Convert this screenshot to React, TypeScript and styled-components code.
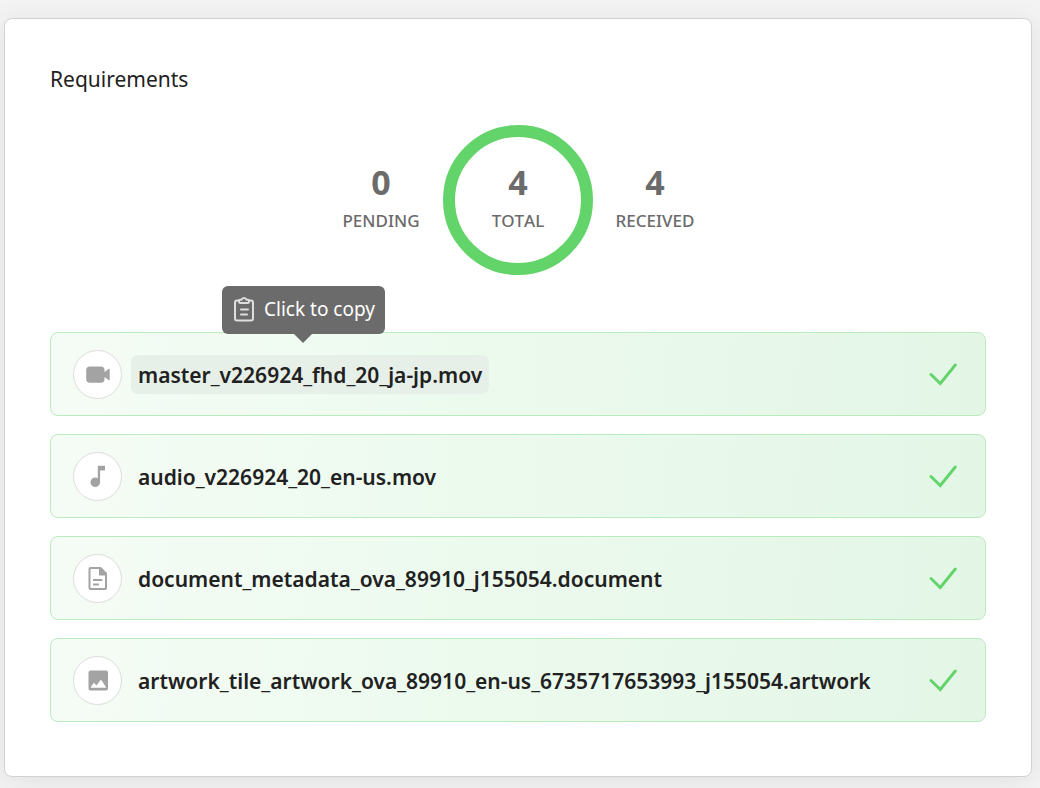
import React from "react";
import styled, { createGlobalStyle } from "styled-components";

const GlobalStyle = createGlobalStyle`
  *, *::before, *::after { box-sizing: border-box; }
  body {
    margin: 0;
    min-height: 100vh;
    background: #f3f3f3;
    color: #212121;
    font-family: "Noto Sans", "Open Sans", sans-serif;
  }
`;

const Page = styled.main`
  padding: 18px 8px 11px 4px;
`;

const Card = styled.section`
  padding: 45px 45px 54px;
  background: #fff;
  border: 1px solid #d2d2d2;
  border-radius: 8px;
  box-shadow: 0 4px 28px rgba(0, 0, 0, 0.08);
`;

const Title = styled.h1`
  margin: 0;
  font-size: 21px;
  line-height: 30px;
  font-weight: 400;
`;

const Summary = styled.div`
  display: flex;
  justify-content: center;
  align-items: center;
  gap: 22px;
  margin: 31px 0 57px;
`;

const Stat = styled.div<{ $ring?: boolean }>`
  display: flex;
  flex-direction: column;
  align-items: center;
  justify-content: center;
  width: ${(p) => (p.$ring ? "150px" : "80px")};
  height: 150px;
  padding-bottom: 2px;
  border: ${(p) => (p.$ring ? "12px solid #62d46a" : "0")};
  border-radius: 50%;
  color: #6b6b6b;
`;

const Count = styled.strong`
  font-size: 34px;
  line-height: 44px;
  font-weight: 700;
`;

const Label = styled.span`
  font-size: 17px;
  line-height: 34px;
  font-weight: 500;
  font-kerning: none;
`;

const List = styled.ul`
  display: flex;
  flex-direction: column;
  gap: 18px;
  margin: 0;
  padding: 0;
  list-style: none;
`;

const Row = styled.li`
  display: flex;
  align-items: center;
  gap: 9px;
  height: 84px;
  padding: 0 28px 0 22px;
  border: 1px solid #b9ebbd;
  border-radius: 8px;
  background: linear-gradient(95deg, #f5fcf5 0%, #ecfaee 45%, #e3f6e6 100%);
`;

const IconCircle = styled.span`
  display: flex;
  flex: none;
  align-items: center;
  justify-content: center;
  width: 49px;
  height: 49px;
  border: 1px solid #dcdcdc;
  border-radius: 50%;
  background: #fff;
  color: #a3a3a3;
`;

const NameArea = styled.div`
  position: relative;
  margin-right: auto;
`;

const FileName = styled.button<{ $active?: boolean }>`
  display: block;
  height: 39px;
  padding: 1px 7px 0;
  border: 0;
  border-radius: 7px;
  background: ${(p) => (p.$active ? "#e7f0e8" : "transparent")};
  color: #212121;
  font: inherit;
  font-size: 21px;
  line-height: 38px;
  font-weight: 600;
  white-space: nowrap;
  cursor: pointer;
`;

const Tooltip = styled.div`
  position: absolute;
  left: 91px;
  bottom: 60px;
  display: flex;
  align-items: center;
  gap: 8px;
  height: 48px;
  padding: 0 10px 1px;
  border-radius: 6px;
  background: #6b6b6b;
  color: #fff;
  font-size: 19px;
  line-height: 24px;
  white-space: nowrap;

  &::after {
    content: "";
    position: absolute;
    top: 100%;
    left: 50%;
    margin-left: -9px;
    border: 9px solid transparent;
    border-top-color: #6b6b6b;
    border-bottom: 0;
  }
`;

type Kind = "video" | "audio" | "document" | "artwork";

const shapes: Record<Kind, React.ReactNode> = {
  video: (
    <path
      fill="currentColor"
      d="M4 4.500H15Q18.500 4.500 18.500 8V10L22.500 7Q23.700 6.500 23.700 7.600V17.400Q23.700 18.500 22.500 18L18.500 15V17Q18.500 20.800 15 20.800H4Q.2 20.800.2 17V8Q.2 4.500 4 4.500Z"
    />
  ),
  audio: (
    <path
      fill="currentColor"
      d="M11.800 1.800H19V6.600H14.100V18A4.800 4.800 0 1 1 11.800 14.100Z"
    />
  ),
  document: (
    <>
      <path
        fill="none"
        stroke="currentColor"
        strokeWidth="2"
        strokeLinejoin="round"
        d="M14.500 2H4.500Q3.500 2 3.500 3V22Q3.500 23 4.500 23H19Q20 23 20 22V7.500Z"
      />
      <path fill="currentColor" d="M13 2H15L21 7.800V9.500H13Z" />
      <path stroke="currentColor" strokeWidth="2" d="M7 14H16.300M7 18.500H13" />
    </>
  ),
  artwork: (
    <path
      fill="currentColor"
      fillRule="evenodd"
      d="M4.500 2.500H20A2 2 0 0 1 22 4.500V20.500A2 2 0 0 1 20 22.500H4.500A2 2 0 0 1 2.500 20.500V4.500A2 2 0 0 1 4.500 2.500ZM4.500 19.800H20.300L15 11.500L10.500 17.500L7.800 14.800Z"
    />
  ),
};

const KindIcon = ({ kind }: { kind: Kind }) => (
  <svg width="24" height="24" viewBox="0 0 24 24" aria-hidden="true">
    {shapes[kind]}
  </svg>
);

const CheckIcon = () => (
  <svg width="28" height="24" viewBox="0 0 28 24" role="img" aria-label="Received">
    <path
      d="M2 12.500L11.300 21.500L26.300 3"
      fill="none"
      stroke="#62d46a"
      strokeWidth="2.900"
      strokeLinecap="round"
      strokeLinejoin="miter"
    />
  </svg>
);

const ClipboardIcon = () => (
  <svg width="24" height="26" viewBox="0 0 24 26" fill="none" stroke="#dedede" strokeWidth="2" strokeLinecap="round" strokeLinejoin="round" aria-hidden="true">
    <path d="M7 4.500H5Q3 4.500 3 6.500V22.500Q3 24.500 5 24.500H19Q21 24.500 21 22.500V6.500Q21 4.500 19 4.500H17" />
    <path d="M8 3.800H9.500Q10 2 12 2T14.500 3.800H16Q17 3.800 17 5V5.500Q17 7 15.500 7H8.500Q7 7 7 5.500V5Q7 3.800 8 3.800ZM9 13.500H16M9 18.500H15" />
  </svg>
);

const stats = [
  { value: 0, label: "PENDING" },
  { value: 4, label: "TOTAL", ring: true },
  { value: 4, label: "RECEIVED" },
];

const files: { kind: Kind; name: string; hint?: boolean }[] = [
  { kind: "video", name: "master_v226924_fhd_20_ja-jp.mov", hint: true },
  { kind: "audio", name: "audio_v226924_20_en-us.mov" },
  { kind: "document", name: "document_metadata_ova_89910_j155054.document" },
  { kind: "artwork", name: "artwork_tile_artwork_ova_89910_en-us_6735717653993_j155054.artwork" },
];

export default function App() {
  return (
    <>
      <GlobalStyle />
      <Page>
        <Card>
          <Title>Requirements</Title>
          <Summary>
            {stats.map((s) => (
              <Stat key={s.label} $ring={s.ring}>
                <Count>{s.value}</Count>
                <Label>{s.label}</Label>
              </Stat>
            ))}
          </Summary>
          <List>
            {files.map((f) => (
              <Row key={f.name}>
                <IconCircle>
                  <KindIcon kind={f.kind} />
                </IconCircle>
                <NameArea>
                  <FileName
                    type="button"
                    $active={f.hint}
                    aria-describedby={f.hint ? "copy-hint" : undefined}
                    onClick={() => navigator.clipboard?.writeText(f.name)}
                  >
                    {f.name}
                  </FileName>
                  {f.hint && (
                    <Tooltip role="tooltip" id="copy-hint">
                      <ClipboardIcon />
                      Click to copy
                    </Tooltip>
                  )}
                </NameArea>
                <CheckIcon />
              </Row>
            ))}
          </List>
        </Card>
      </Page>
    </>
  );
}
